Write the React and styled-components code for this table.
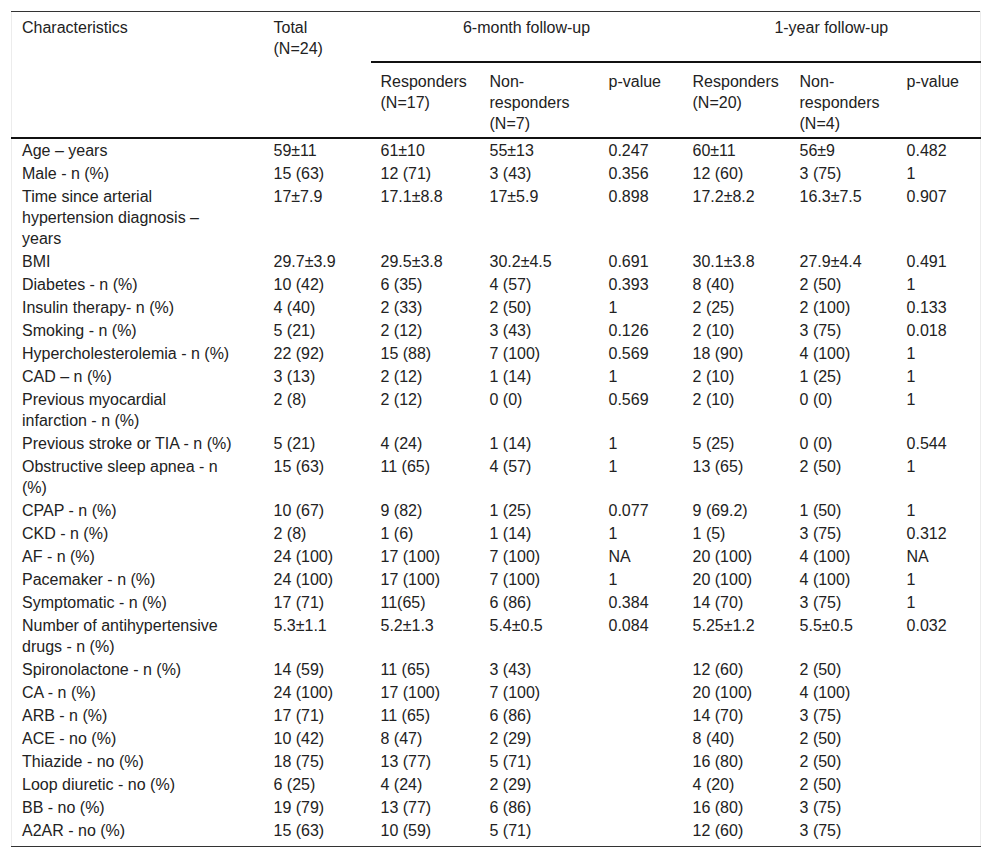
import React from "react";
import styled, { createGlobalStyle } from "styled-components";

const GlobalStyle = createGlobalStyle`
  body {
    margin: 0;
    background: #ffffff;
    font-family: "Liberation Sans", Arial, sans-serif;
    color: #222222;
  }
`;

const Page = styled.div`
  padding: 11px;
`;

const Table = styled.table`
  width: 970px;
  border-collapse: collapse;
  table-layout: fixed;
  font-size: 16px;
  line-height: 21px;
  border-top: 1px solid #333333;
  border-bottom: 1px solid #333333;
  border-left: 1px solid #ececec;
  border-right: 1px solid #ececec;
`;

const HeadCell = styled.th`
  font-weight: normal;
  text-align: ${(props) => (props.$center ? "center" : "left")};
  vertical-align: top;
  padding: ${(props) =>
    props.$group ? "5px 10px 23px" : props.$sub ? "8px 10px 3px" : "5px 10px 3px"};
  padding-right: ${(props) => (props.$first ? "31px" : "")};
  border-bottom: 2px solid #111111;
`;

const Row = styled.tr`
  &:last-child td {
    padding-bottom: 5px;
  }
`;

const Cell = styled.td`
  vertical-align: top;
  padding: 1px 10px;
  &:first-child {
    padding-right: 31px;
  }
`;

const widths = [252, 107, 109, 119, 84, 107, 107, 84];

const rows = [
  ["Age – years", "59±11", "61±10", "55±13", "0.247", "60±11", "56±9", "0.482"],
  ["Male - n (%)", "15 (63)", "12 (71)", "3 (43)", "0.356", "12 (60)", "3 (75)", "1"],
  ["Time since arterial hypertension diagnosis – years", "17±7.9", "17.1±8.8", "17±5.9", "0.898", "17.2±8.2", "16.3±7.5", "0.907"],
  ["BMI", "29.7±3.9", "29.5±3.8", "30.2±4.5", "0.691", "30.1±3.8", "27.9±4.4", "0.491"],
  ["Diabetes - n (%)", "10 (42)", "6 (35)", "4 (57)", "0.393", "8 (40)", "2 (50)", "1"],
  ["Insulin therapy- n (%)", "4 (40)", "2 (33)", "2 (50)", "1", "2 (25)", "2 (100)", "0.133"],
  ["Smoking - n (%)", "5 (21)", "2 (12)", "3 (43)", "0.126", "2 (10)", "3 (75)", "0.018"],
  ["Hypercholesterolemia - n (%)", "22 (92)", "15 (88)", "7 (100)", "0.569", "18 (90)", "4 (100)", "1"],
  ["CAD – n (%)", "3 (13)", "2 (12)", "1 (14)", "1", "2 (10)", "1 (25)", "1"],
  ["Previous myocardial infarction - n (%)", "2 (8)", "2 (12)", "0 (0)", "0.569", "2 (10)", "0 (0)", "1"],
  ["Previous stroke or TIA - n (%)", "5 (21)", "4 (24)", "1 (14)", "1", "5 (25)", "0 (0)", "0.544"],
  ["Obstructive sleep apnea - n (%)", "15 (63)", "11 (65)", "4 (57)", "1", "13 (65)", "2 (50)", "1"],
  ["CPAP - n (%)", "10 (67)", "9 (82)", "1 (25)", "0.077", "9 (69.2)", "1 (50)", "1"],
  ["CKD - n (%)", "2 (8)", "1 (6)", "1 (14)", "1", "1 (5)", "3 (75)", "0.312"],
  ["AF - n (%)", "24 (100)", "17 (100)", "7 (100)", "NA", "20 (100)", "4 (100)", "NA"],
  ["Pacemaker - n (%)", "24 (100)", "17 (100)", "7 (100)", "1", "20 (100)", "4 (100)", "1"],
  ["Symptomatic - n (%)", "17 (71)", "11(65)", "6 (86)", "0.384", "14 (70)", "3 (75)", "1"],
  ["Number of antihypertensive drugs - n (%)", "5.3±1.1", "5.2±1.3", "5.4±0.5", "0.084", "5.25±1.2", "5.5±0.5", "0.032"],
  ["Spironolactone - n (%)", "14 (59)", "11 (65)", "3 (43)", "", "12 (60)", "2 (50)", ""],
  ["CA - n (%)", "24 (100)", "17 (100)", "7 (100)", "", "20 (100)", "4 (100)", ""],
  ["ARB - n (%)", "17 (71)", "11 (65)", "6 (86)", "", "14 (70)", "3 (75)", ""],
  ["ACE - no (%)", "10 (42)", "8 (47)", "2 (29)", "", "8 (40)", "2 (50)", ""],
  ["Thiazide - no (%)", "18 (75)", "13 (77)", "5 (71)", "", "16 (80)", "2 (50)", ""],
  ["Loop diuretic - no (%)", "6 (25)", "4 (24)", "2 (29)", "", "4 (20)", "2 (50)", ""],
  ["BB - no (%)", "19 (79)", "13 (77)", "6 (86)", "", "16 (80)", "3 (75)", ""],
  ["A2AR - no (%)", "15 (63)", "10 (59)", "5 (71)", "", "12 (60)", "3 (75)", ""],
];

const App = () => {
  return (
    <Page>
      <GlobalStyle />
      <Table>
        <colgroup>
          {widths.map((w, i) => (
            <col key={i} style={{ width: w }} />
          ))}
        </colgroup>
        <thead>
          <tr>
            <HeadCell rowSpan={2} $first>Characteristics</HeadCell>
            <HeadCell rowSpan={2}>
              Total
              <br />
              (N=24)
            </HeadCell>
            <HeadCell colSpan={3} $center $group>6-month follow-up</HeadCell>
            <HeadCell colSpan={3} $center $group>1-year follow-up</HeadCell>
          </tr>
          <tr>
            <HeadCell $sub>Responders<br />(N=17)</HeadCell>
            <HeadCell $sub>Non-<br />responders<br />(N=7)</HeadCell>
            <HeadCell $sub>p-value</HeadCell>
            <HeadCell $sub>Responders<br />(N=20)</HeadCell>
            <HeadCell $sub>Non-<br />responders<br />(N=4)</HeadCell>
            <HeadCell $sub>p-value</HeadCell>
          </tr>
        </thead>
        <tbody>
          {rows.map((row, i) => (
            <Row key={i}>
              {row.map((v, j) => (
                <Cell key={j}>{v}</Cell>
              ))}
            </Row>
          ))}
        </tbody>
      </Table>
    </Page>
  );
};

export default App;
